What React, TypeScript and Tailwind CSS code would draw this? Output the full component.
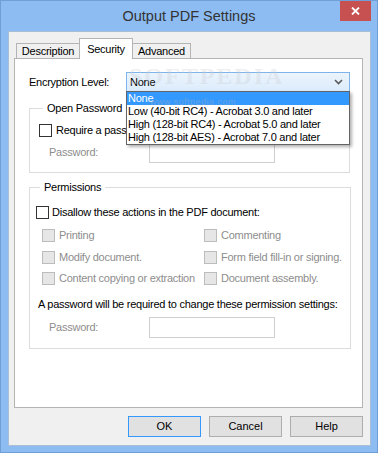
import React from "react";

function Check({ disabled }: { disabled?: boolean }) {
  return (
    <span
      className={
        disabled
          ? "block w-[13px] h-[13px] shrink-0 border border-[#bcbcbc] bg-[#e6e6e6]"
          : "block w-[13px] h-[13px] shrink-0 border border-[#333333] bg-white"
      }
    />
  );
}

function Perm({ label }: { label: string }) {
  return (
    <div className="flex items-center h-[21.5px] gap-[4px] whitespace-nowrap">
      <Check disabled />
      <span className="text-[#8d8d8d]">{label}</span>
    </div>
  );
}

function PwdRow() {
  return (
    <div className="flex items-center">
      <span className="w-[100px] text-[#8d8d8d]">Password:</span>
      <span className="block w-[126px] h-[21px] border border-[#cfcfcf] bg-white" />
    </div>
  );
}

export default function App() {
  return (
    <div className="w-[378px] h-[453px] bg-[#8cbcf2] border border-[#6f9fd6] flex flex-col font-['Liberation_Sans',Arial,sans-serif] text-[11px] leading-[13px] tracking-[-0.25px] text-black select-none">
      {/* Title bar */}
      <div className="relative h-[30px] shrink-0 flex items-center justify-center">
        <span className="text-[14.5px] tracking-normal text-[#333333] mt-[1px]">
          Output PDF Settings
        </span>
        <div className="absolute right-[6px] top-0 w-[31px] h-[20px] bg-[#c75050] flex items-center justify-center">
          <svg width="9" height="8" viewBox="0 0 9 8">
            <path d="M1 0.5 L8 7.5 M8 0.5 L1 7.5" stroke="white" strokeWidth="1.8" />
          </svg>
        </div>
      </div>

      {/* Content */}
      <div className="flex-1 ml-[7px] mr-[6px] mb-[6px] bg-[#f0f0f0] border border-[#a9bfd8] flex flex-col pt-[6px] pl-[5px] pr-[7px] pb-[8px]">
        {/* Tabs */}
        <div className="flex items-end h-[20px] pl-[2px] shrink-0 relative z-10">
          <div className="w-[63px] h-[15px] border border-b-0 border-r-0 border-[#b4b4b4] bg-[#f0f0f0] flex items-center justify-center pt-[1px]">
            Description
          </div>
          <div className="w-[54px] h-[21px] -mb-[1px] border border-b-0 border-[#b4b4b4] bg-white flex items-start justify-center pt-[4px]">
            Security
          </div>
          <div className="w-[58px] h-[15px] border border-b-0 border-l-0 border-[#b4b4b4] bg-[#f0f0f0] flex items-center justify-center pt-[1px]">
            Advanced
          </div>
        </div>

        {/* Panel */}
        <div className="flex-1 bg-white border border-[#b4b4b4] pl-[14px] pr-[12px] pt-[13px] relative">
          {/* Encryption row */}
          <div className="flex items-center h-[20px]">
            <span className="w-[97px]">Encryption Level:</span>
            <div className="relative w-[224px] h-[20px]">
              <div className="w-full h-full border border-[#7eb4ea] bg-gradient-to-b from-[#ecf4fc] to-[#dcecfc] flex items-center pl-[3px] pr-[6px] justify-between">
                <span>None</span>
                <svg width="9" height="6" viewBox="0 0 9 6">
                  <path d="M1 1 L4.5 4.5 L8 1" stroke="#5a5a5a" strokeWidth="1.6" fill="none" />
                </svg>
              </div>
              {/* Dropdown list */}
              <div className="absolute left-0 top-[19px] w-[224px] bg-white border border-[#646464] shadow-[2px_2px_3px_rgba(0,0,0,0.3)] z-20">
                <div className="h-[13px] bg-[#3399ff] text-white pl-[1px] flex items-center">None</div>
                <div className="h-[13px] pl-[1px] flex items-center">Low (40-bit RC4) - Acrobat 3.0 and later</div>
                <div className="h-[13px] pl-[1px] flex items-center">High (128-bit RC4) - Acrobat 5.0 and later</div>
                <div className="h-[13px] pl-[1px] flex items-center">High (128-bit AES) - Acrobat 7.0 and later</div>
              </div>
            </div>
          </div>

          {/* Open Password group */}
          <fieldset className="mt-[10px] border border-[#dcdcdc] pl-[9px] pr-[8px] pb-[9px]">
            <legend className="ml-[4px] px-[4px] leading-[13px]">Open Password</legend>
            <div className="flex items-center gap-[4px] mt-[8px] h-[14px]">
              <Check />
              <span className="block w-[70px] overflow-hidden whitespace-nowrap">Require a password</span>
            </div>
            <div className="mt-[5px] pl-[10px]">
              <PwdRow />
            </div>
          </fieldset>

          {/* Permissions group */}
          <fieldset className="mt-[8px] border border-[#dcdcdc] pl-[6px] pr-[8px] pb-[10px]">
            <legend className="ml-[4px] px-[4px] leading-[13px]">Permissions</legend>
            <div className="flex items-center gap-[3px] mt-[11px] h-[14px]">
              <Check />
              <span>Disallow these actions in the PDF document:</span>
            </div>
            <div className="grid grid-cols-[162px_1fr] pl-[6px] mt-[6px]">
              <Perm label="Printing" />
              <Perm label="Commenting" />
              <Perm label="Modify document." />
              <Perm label="Form field fill-in or signing." />
              <Perm label="Content copying or extraction" />
              <Perm label="Document assembly." />
            </div>
            <div className="mt-[8px] pl-[2px] whitespace-nowrap">
              A password will be required to change these permission settings:
            </div>
            <div className="mt-[6px] pl-[13px]">
              <PwdRow />
            </div>
          </fieldset>

          {/* Watermark */}
          <div className="absolute left-[114px] top-[5px] text-[24px] leading-[24px] font-['Liberation_Serif',serif] font-bold tracking-[2px] text-[#c8ccd4] opacity-30 pointer-events-none z-30">
            SOFTPEDIA
          </div>
          <div className="absolute left-[135px] top-[38px] text-[9px] leading-[10px] tracking-[0.5px] text-[#b0b0b0] opacity-40 pointer-events-none z-30">
            www.softpedia.com
          </div>
        </div>

        {/* Buttons */}
        <div className="flex justify-end gap-[8px] mt-[8px] shrink-0">
          <button className="w-[73px] h-[21px] border border-[#3399ff] bg-[#e1e1e1] flex items-center justify-center tracking-normal text-[11px]">
            OK
          </button>
          <button className="w-[73px] h-[21px] border border-[#adadad] bg-[#e1e1e1] flex items-center justify-center tracking-normal text-[11px]">
            Cancel
          </button>
          <button className="w-[73px] h-[21px] border border-[#adadad] bg-[#e1e1e1] flex items-center justify-center tracking-normal text-[11px]">
            Help
          </button>
        </div>
      </div>
    </div>
  );
}
